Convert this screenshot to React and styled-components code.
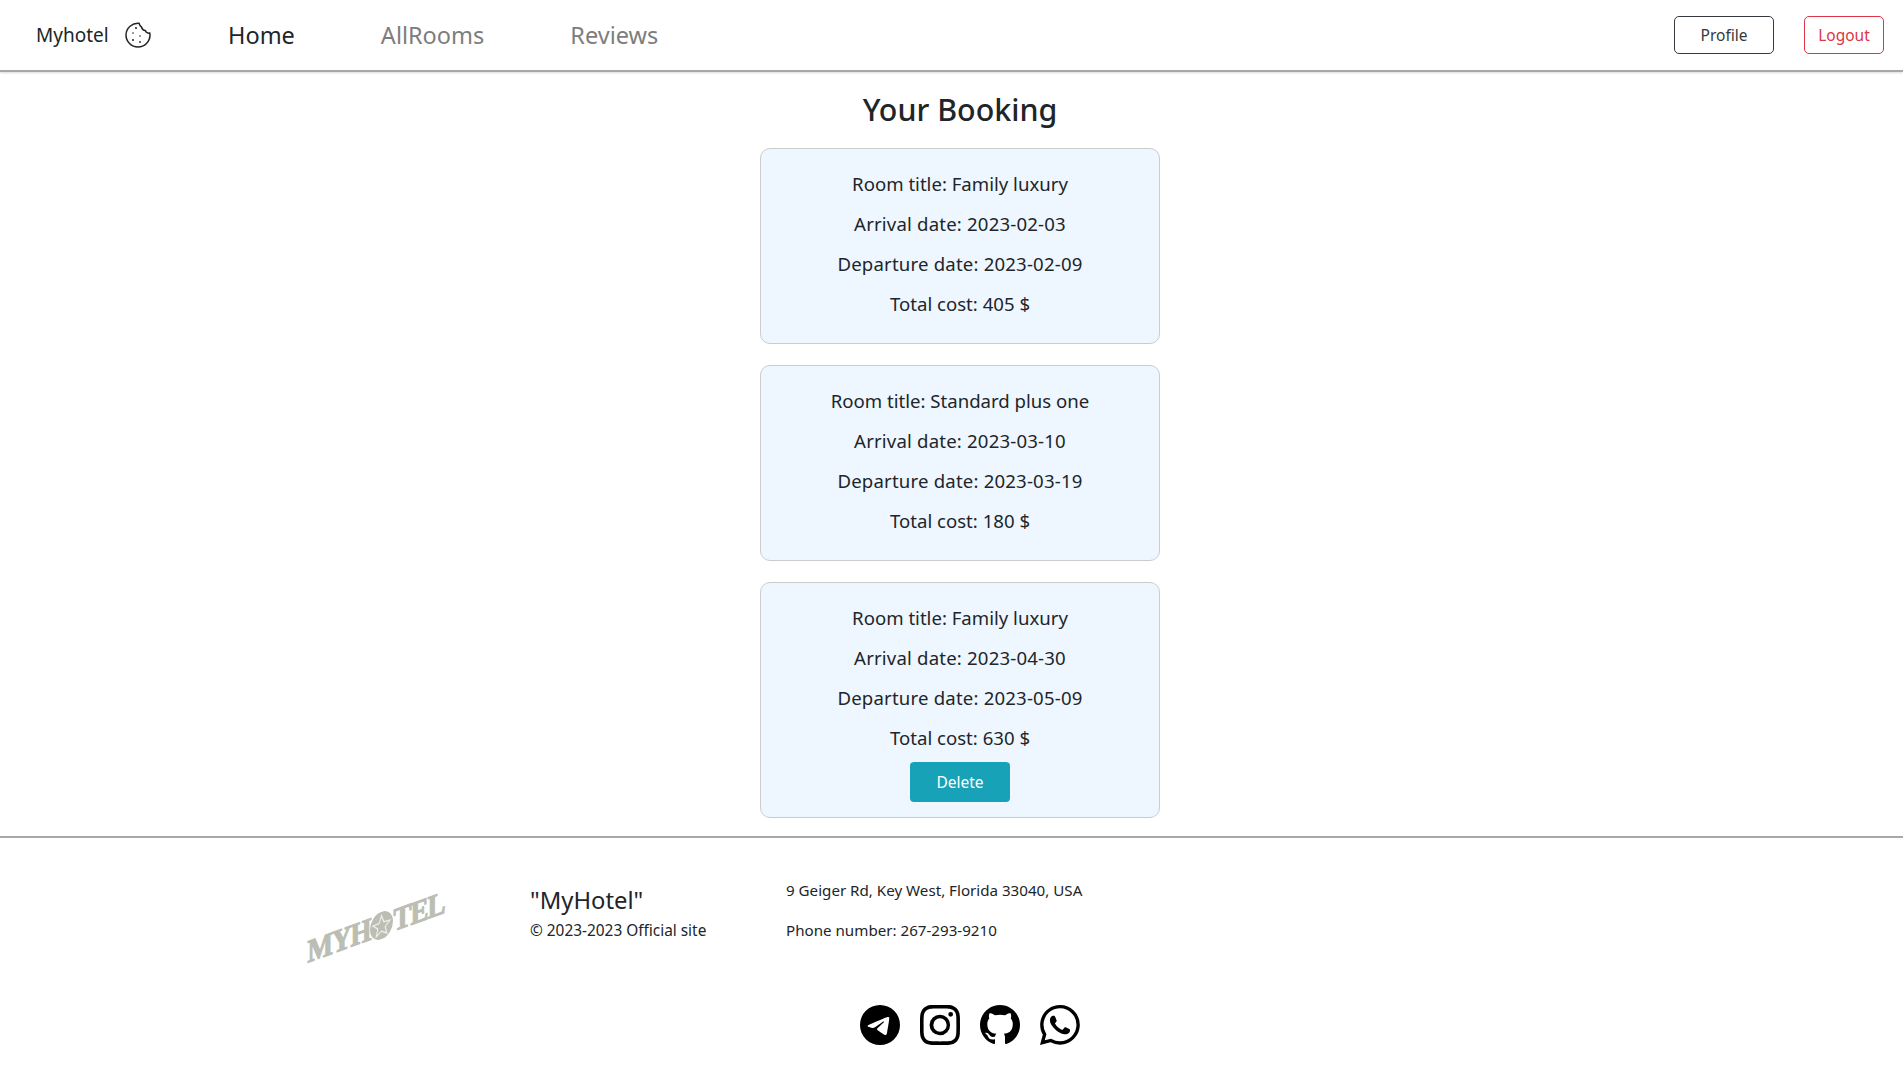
import styled, { createGlobalStyle } from 'styled-components';
import { BsTelegram, BsInstagram, BsGithub, BsWhatsapp } from 'react-icons/bs';

const GlobalStyle = createGlobalStyle`
  body {
    margin: 0;
    background: #fff;
    color: #212529;
    font-family: "Noto Sans", "Open Sans", sans-serif;
  }
`;

const bookings = [
  { title: 'Family luxury', arrival: '2023-02-03', departure: '2023-02-09', cost: 405 },
  { title: 'Standard plus one', arrival: '2023-03-10', departure: '2023-03-19', cost: 180 },
  { title: 'Family luxury', arrival: '2023-04-30', departure: '2023-05-09', cost: 630, canDelete: true },
];

const Navbar = styled.nav`
  height: 70px;
  display: flex;
  align-items: center;
  padding: 0 19px 0 36px;
  border-bottom: 2px solid #a8a8a8;
  box-shadow: 0 1px 2px rgba(0, 0, 0, 0.15);
`;

const Brand = styled.div`
  display: flex;
  align-items: center;
  gap: 16px;
  width: 192px;
  font-size: 19px;
  color: #212529;
`;

const NavLinks = styled.div`
  display: flex;
  gap: 86px;
  flex: 1;
`;

const NavLink = styled.a`
  font-size: 23.5px;
  color: ${props => (props.$active ? '#212529' : '#7d7d7d')};
`;

const OutlineButton = styled.button`
  height: 38px;
  width: ${props => props.$width}px;
  margin-left: ${props => props.$gap}px;
  background: #fff;
  border: 1px solid ${props => props.$color};
  border-radius: 5px;
  color: ${props => props.$color};
  font: inherit;
  font-size: 15.5px;
`;

const Main = styled.main`
  display: flex;
  flex-direction: column;
  align-items: center;
  padding-left: 17px;
`;

const Title = styled.h2`
  margin: 16px 0 16px;
  font-size: 30.4px;
  line-height: 44px;
  font-weight: 500;
  color: #212529;
`;

const Card = styled.div`
  width: 400px;
  box-sizing: border-box;
  margin-bottom: 21px;
  padding: 20px 20px 14px;
  background: #eef7ff;
  border: 1px solid #cccccc;
  border-radius: 10px;
  text-align: center;

  &:last-child {
    margin-bottom: 18px;
  }
`;

const CardLine = styled.p`
  margin: 0 0 10px;
  font-size: 18.6px;
  line-height: 30px;
  letter-spacing: ${props => (props.$wide ? '0.18px' : 'normal')};
`;

const DeleteButton = styled.button`
  display: block;
  width: 100px;
  height: 40px;
  margin: -1px auto 1px;
  padding: 0;
  background: #17a2b8;
  border: none;
  border-radius: 4px;
  color: #fff;
  font: inherit;
  font-size: 15.5px;
`;

const Footer = styled.footer`
  border-top: 2px solid #a8a8a8;
  height: 250px;
  box-sizing: border-box;
  padding: 40px 0 0 305px;
`;

const FooterTop = styled.div`
  display: flex;
`;

const LogoBox = styled.div`
  width: 225px;
  height: 120px;
  flex-shrink: 0;
`;

const Logo = styled.div`
  display: flex;
  align-items: center;
  justify-content: center;
  width: 142px;
  margin-top: 34px;
  transform: skewY(-20deg) scaleY(1.2);
  font-family: "Liberation Serif", serif;
  font-weight: 700;
  font-size: 27px;
  letter-spacing: -1px;
  -webkit-text-stroke: 1px #bcbeb4;
  color: #bcbeb4;
  white-space: nowrap;
`;

const Brandline = styled.div`
  width: 256px;
  margin-top: 5px;
  flex-shrink: 0;
`;

const BrandName = styled.div`
  font-size: 23.8px;
  line-height: 34px;
  margin-bottom: 2px;
  color: #212529;
`;

const FooterText = styled.p`
  margin: 0 0 ${props => props.$gap || 0}px;
  font-size: ${props => props.$size || 15.15}px;
  line-height: 24px;
`;

const Socials = styled.div`
  display: flex;
  gap: 20px;
  margin: 7px 0 0 555px;
  font-size: 40px;
  color: #000;
`;

const CookieIcon = () => (
  <svg width="26" height="26" viewBox="0 0 26 26" fill="none" stroke="#212529" strokeWidth="1.5">
    <path d="M14 1.2 C7.5 0.6 1 6 1 13 C1 19.6 6.4 25 13 25 C19.6 25 25 19.6 25 13 C25 12 24.9 11.5 24.7 11 C23 11.5 21 10.5 20.5 8.7 C18.5 8.5 17 7 16.5 5 C15.5 4.5 14.5 3 14 1.2 Z" />
    <g fill="#212529" stroke="none">
      <circle cx="11" cy="6" r="1" />
      <circle cx="8" cy="11" r="0.8" />
      <circle cx="15" cy="14" r="0.8" />
      <circle cx="8" cy="18" r="1" />
      <circle cx="15" cy="20" r="0.9" />
    </g>
  </svg>
);

const LogoStar = () => (
  <svg width="23" height="23" viewBox="0 0 24 24">
    <circle cx="12" cy="12" r="12" fill="#bcbeb4" />
    <path d="M12 3.5 L14.4 9.5 L20.8 9.9 L15.9 14 L17.5 20.3 L12 16.8 L6.5 20.3 L8.1 14 L3.2 9.9 L9.6 9.5 Z" fill="none" stroke="#eceee8" strokeWidth="1.2" />
  </svg>
);

const App = () => {
  return (
    <>
      <GlobalStyle />
      <Navbar>
        <Brand>
          Myhotel
          <CookieIcon />
        </Brand>
        <NavLinks>
          <NavLink $active>Home</NavLink>
          <NavLink>AllRooms</NavLink>
          <NavLink>Reviews</NavLink>
        </NavLinks>
        <OutlineButton $width={100} $color="#343a40">Profile</OutlineButton>
        <OutlineButton $width={80} $gap={30} $color="#dc3545">Logout</OutlineButton>
      </Navbar>
      <Main>
        <Title>Your Booking</Title>
        {bookings.map((booking) => (
          <Card key={booking.arrival}>
            <CardLine>Room title: {booking.title}</CardLine>
            <CardLine $wide>Arrival date: {booking.arrival}</CardLine>
            <CardLine $wide>Departure date: {booking.departure}</CardLine>
            <CardLine>Total cost: {booking.cost} $</CardLine>
            {booking.canDelete && <DeleteButton>Delete</DeleteButton>}
          </Card>
        ))}
      </Main>
      <Footer>
        <FooterTop>
          <LogoBox>
            <Logo>MYH<LogoStar />TEL</Logo>
          </LogoBox>
          <Brandline>
            <BrandName>"MyHotel"</BrandName>
            <FooterText $size={15.4}>© 2023-2023 Official site</FooterText>
          </Brandline>
          <div>
            <FooterText $gap={16}>9 Geiger Rd, Key West, Florida 33040, USA</FooterText>
            <FooterText>Phone number: 267-293-9210</FooterText>
          </div>
        </FooterTop>
        <Socials>
          <BsTelegram />
          <BsInstagram />
          <BsGithub />
          <BsWhatsapp />
        </Socials>
      </Footer>
    </>
  );
};

export default App;
